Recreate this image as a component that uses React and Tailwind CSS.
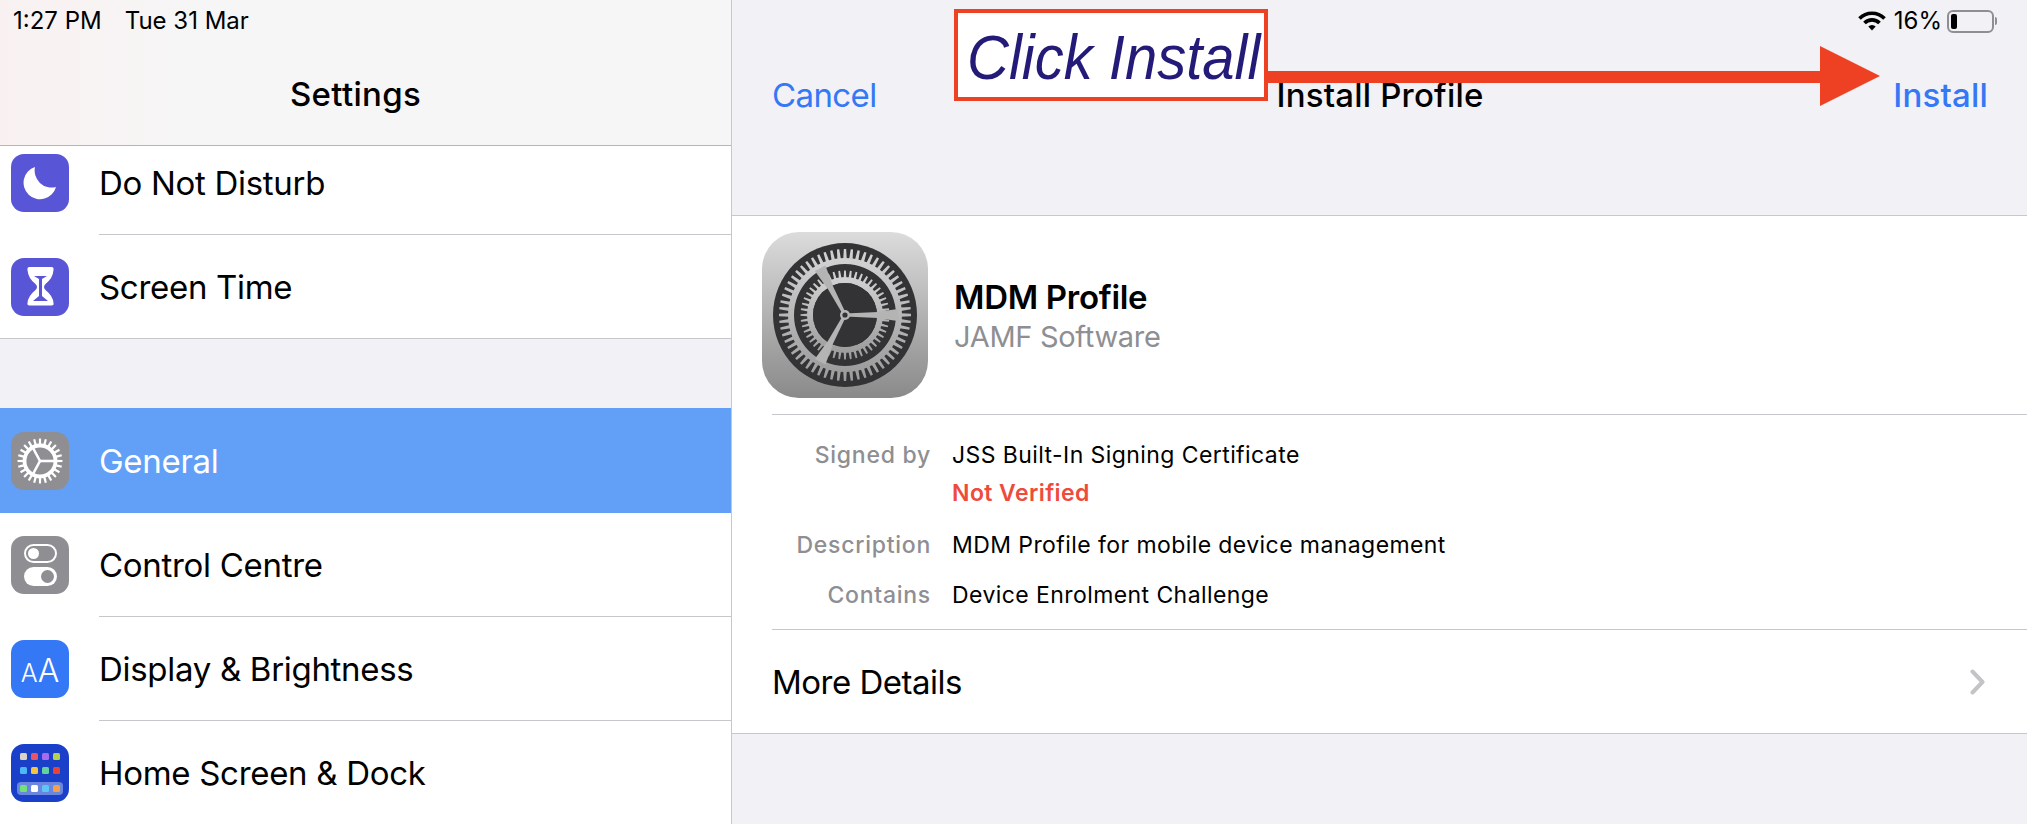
const polar = (r, deg) => {
  const a = (deg * Math.PI) / 180;
  return `${(r * Math.cos(a)).toFixed(2)} ${(r * Math.sin(a)).toFixed(2)}`;
};

// ring of trapezoid teeth around 0,0
function teeth(count, rIn, rOut, wide = 0.3, narrow = 0.17) {
  const step = 360 / count;
  let d = '';
  for (let i = 0; i < count; i++) {
    const a = i * step;
    d += `M${polar(rIn, a - step * wide)}L${polar(rOut, a - step * narrow)}L${polar(rOut, a + step * narrow)}L${polar(rIn, a + step * wide)}Z`;
  }
  return d;
}

function BigGear() {
  return (
    <svg viewBox="-83 -83 166 166" className="w-[166px] h-[166px]">
      <defs>
        <linearGradient id="metal" x1="0" y1="0" x2="0" y2="1">
          <stop offset="0" stopColor="#d2d2d2" />
          <stop offset="1" stopColor="#9c9c9c" />
        </linearGradient>
      </defs>
      <circle r="72" fill="#333335" />
      <g fill="url(#metal)">
        <path d={teeth(60, 56, 66)} />
        <path fillRule="evenodd" d="M0 -57A57 57 0 1 1 0 57A57 57 0 1 1 0 -57ZM0 -51A51 51 0 1 0 0 51A51 51 0 1 0 0 -51Z" />
        <path d={teeth(48, 36, 44.5, 0.3, 0.15)} />
        <path fillRule="evenodd" d="M0 -38A38 38 0 1 1 0 38A38 38 0 1 1 0 -38ZM0 -32A32 32 0 1 0 0 32A32 32 0 1 0 0 -32Z" />
      </g>
      <g fill="#b4b4b4">
        {[0, 118, 242].map((deg) => (
          <polygon key={deg} transform={`rotate(${deg})`} points="31,-3 53,-6 53,6 31,3" />
        ))}
      </g>
      <circle r="32" fill="#333335" />
      <g fill="#b4b4b4">
        {[0, 118, 242].map((deg) => (
          <polygon key={deg} transform={`rotate(${deg})`} points="0,-1.5 33,-3 33,3 0,1.5" />
        ))}
      </g>
      <circle r="5" fill="#b6b6b6" />
      <circle r="2.6" fill="#333335" />
    </svg>
  );
}

function SmallGear() {
  return (
    <svg viewBox="-29 -29 58 58" className="w-[58px] h-[58px]">
      <path d={teeth(24, 15.5, 22.5, 0.3, 0.18)} fill="white" />
      <circle r="15.5" fill="none" stroke="white" strokeWidth="3.8" />
      <g stroke="white" strokeWidth="2.6">
        <line x1="0" y1="0" x2="15" y2="0" />
        <line x1="0" y1="0" x2="-7" y2="-13" />
        <line x1="0" y1="0" x2="-7" y2="13" />
      </g>
    </svg>
  );
}

function Moon() {
  return (
    <svg viewBox="0 0 58 58" className="w-[58px] h-[58px]">
      <path d="M24 13 A16.5 16.5 0 1 0 45 33 A17 17 0 0 1 24 13 Z" fill="white" />
    </svg>
  );
}

function Hourglass() {
  return (
    <svg viewBox="0 0 58 58" className="w-[58px] h-[58px]">
      <path
        d="M18.5 9 H40.5 Q43 9 42.5 12 Q42 20 34.5 26 Q33 27.5 33 29 Q33 30.5 34.5 32 Q42 38 42.5 45 Q43 47.5 40.5 47.5 H18.5 Q16 47.5 16.5 45 Q17 38 24.5 32 Q26 30.5 26 29 Q26 27.5 24.5 26 Q17 20 16.5 12 Q16 9 18.5 9 Z"
        fill="white"
      />
      <path d="M23 18 H36 L31 21 V38 L37 43 H22 L28 38 V21 Z" fill="#5856d6" />
    </svg>
  );
}

function Toggles() {
  return (
    <div className="flex flex-col gap-[4px] w-[33px]">
      <div className="h-[19px] rounded-full border-2 border-white flex items-center pl-[2px]">
        <div className="w-[11px] h-[11px] rounded-full bg-white" />
      </div>
      <div className="h-[19px] rounded-full bg-white flex items-center justify-end pr-[3px]">
        <div className="w-[13px] h-[13px] rounded-full bg-[#8e8e93]" />
      </div>
    </div>
  );
}

function TextSize() {
  return (
    <div className="flex items-baseline text-white font-light leading-none mt-[3px]">
      <span className="text-[25px]">A</span>
      <span className="text-[32px]">A</span>
    </div>
  );
}

const homeRows = [
  ['bg-[#d8d4c8]', 'bg-[#ea5564]', 'bg-[#a66cf0]', 'bg-[#b5d14a]'],
  ['bg-[#4db8f5]', 'bg-[#f5c33c]', 'bg-[#63d2a0]', 'bg-[#ea4335]'],
];

function HomeDots() {
  return (
    <div className="flex flex-col items-center w-[58px] h-full pt-[9px]">
      {homeRows.map((row, i) => (
        <div key={i} className="flex gap-[4px] mb-[7px]">
          {row.map((c) => (
            <div key={c} className={`w-[7px] h-[7px] rounded-[1.5px] ${c}`} />
          ))}
        </div>
      ))}
      <div className="flex gap-[4px] mt-px px-[3px] py-[3px] rounded-[4px] bg-[#6a86de]">
        <div className="w-[7px] h-[7px] rounded-[1.5px] bg-[#74e07a]" />
        <div className="w-[7px] h-[7px] rounded-[1.5px] bg-white" />
        <div className="w-[7px] h-[7px] rounded-[1.5px] bg-[#5cc6f7]" />
        <div className="w-[7px] h-[7px] rounded-[1.5px] bg-[#f2a04a]" />
      </div>
    </div>
  );
}

function SettingsRow({ label, color, height, icon, active, last }) {
  return (
    <div className={`flex shrink-0 pl-[11px] ${height} ${active ? 'bg-[#62a0f8] text-white' : 'bg-white text-black'}`}>
      <div className="h-full flex items-center">
        <div className={`w-[58px] h-[58px] rounded-[13px] flex items-center justify-center ${color}`}>{icon}</div>
      </div>
      <div className={`flex-1 ml-[30px] flex items-center pt-[2px] text-[33px] tracking-[-0.3px] ${last || active ? '' : 'border-b border-[#c8c7cc]'}`}>
        {label}
      </div>
    </div>
  );
}

function Detail({ label, value, className = '' }) {
  return (
    <div className={`flex h-[38px] items-center text-[23px] ${className}`}>
      <div className="w-[199px] text-right text-[#8e8e93] font-medium tracking-[0.75px]">{label}</div>
      <div className="ml-[21px] text-black tracking-[0.42px]">{value}</div>
    </div>
  );
}

export default function App() {
  return (
    <div className="relative w-[2027px] h-[824px] overflow-hidden flex bg-[#f1f1f6] font-['Inter',sans-serif]">
      {/* left column */}
      <div className="w-[732px] shrink-0 h-full border-r border-[#c8c7cc] flex flex-col">
        <div className="h-[146px] shrink-0 border-b border-[#b5b5b8] bg-linear-to-r from-[#f9f1f1] via-[#f6f6f7] via-30% to-[#f6f6f7]">
          <div className="h-[42px] flex items-center pl-[13px] text-[24px] text-black">
            <span>1:27 PM</span>
            <span className="ml-[23px]">Tue 31 Mar</span>
          </div>
          <div className="h-[103px] flex items-center justify-center pr-[20px] pt-[2px] text-[33px] font-medium text-black tracking-[0.3px]">
            Settings
          </div>
        </div>
        {/* first row is scrolled partly under the header */}
        <div className="h-[89px] shrink-0 overflow-hidden flex flex-col justify-end">
          <SettingsRow label="Do Not Disturb" color="bg-[#5856d6]" height="h-[104px]" icon={<Moon />} />
        </div>
        <div className="border-b border-[#c8c7cc]">
          <SettingsRow label="Screen Time" color="bg-[#5856d6]" height="h-[103px]" icon={<Hourglass />} last />
        </div>
        <div className="h-[69px] shrink-0" />
        <SettingsRow label="General" color="bg-[#8e8e93]" height="h-[105px]" icon={<SmallGear />} active />
        <SettingsRow label="Control Centre" color="bg-[#8e8e93]" height="h-[104px]" icon={<Toggles />} />
        <SettingsRow label="Display & Brightness" color="bg-[#3478f6]" height="h-[104px]" icon={<TextSize />} />
        <SettingsRow label="Home Screen & Dock" color="bg-[#1a3fc9]" height="h-[104px]" icon={<HomeDots />} last />
      </div>

      {/* right column */}
      <div className="flex-1 flex flex-col">
        <div className="h-[216px] shrink-0 border-b border-[#c8c7cc]">
          <div className="h-[42px] flex items-center justify-end pr-[30px]">
            <svg viewBox="0 0 28 20" className="w-[28px] h-[20px]" fill="none" stroke="black" strokeWidth="3.6">
              <path d="M1.5 7.5 A17.5 17.5 0 0 1 26.5 7.5" />
              <path d="M6.5 12 A10.5 10.5 0 0 1 21.5 12" />
              <path d="M14 19.5 L10.3 15.6 A5.2 5.2 0 0 1 17.7 15.6 Z" fill="black" stroke="none" />
            </svg>
            <span className="ml-[8px] text-[24px] text-black">16%</span>
            <div className="ml-[5px] flex items-center">
              <div className="w-[47px] h-[23px] rounded-[6px] border-2 border-[#8f8f92] p-[2px]">
                <div className="w-[6px] h-full rounded-[2px] bg-black" />
              </div>
              <div className="ml-[1px] w-[2px] h-[8px] rounded-r-full bg-[#8f8f92]" />
            </div>
          </div>
          <div className="h-[106px] grid grid-cols-[1fr_auto_1fr] items-center pl-[40px] pr-[39px] pt-[1px] text-[33px]">
            <div className="text-[#3478f6] tracking-[-0.6px]">Cancel</div>
            <div className="font-medium text-black tracking-[0.2px]">Install Profile</div>
            <div className="text-right text-[#3478f6] font-medium tracking-[0.2px]">Install</div>
          </div>
        </div>

        <div className="bg-white border-b border-[#c8c7cc] h-[518px]">
          <div className="h-[198px] flex pl-[30px] pt-[16px]">
            <div className="w-[166px] h-[166px] rounded-[37px] bg-linear-to-b from-[#dcdcdc] to-[#8a8a8a]">
              <BigGear />
            </div>
            <div className="ml-[26px] pt-[45px]">
              <div className="text-[33px] leading-[40px] font-semibold text-black tracking-[-0.3px]">MDM Profile</div>
              <div className="text-[29px] leading-[40px] text-[#8e8e93] tracking-[-0.3px]">JAMF Software</div>
            </div>
          </div>
          <div className="ml-[40px] h-px bg-[#c8c7cc]" />
          <div className="h-[214px] pt-[21px]">
            <Detail label="Signed by" value="JSS Built-In Signing Certificate" />
            <Detail label="" value={<span className="text-[#ee4b3c] font-semibold">Not Verified</span>} />
            <Detail label="Description" value="MDM Profile for mobile device management" className="mt-[14px]" />
            <Detail label="Contains" value="Device Enrolment Challenge" className="mt-[12px]" />
          </div>
          <div className="ml-[40px] h-px bg-[#c8c7cc]" />
          <div className="h-[103px] flex items-center justify-between pl-[40px] pr-[42px] pt-[3px] text-[33px] tracking-[-0.5px] text-black">
            <span>More Details</span>
            <svg viewBox="0 0 15 26" className="w-[15px] h-[26px] -mt-[3px]" fill="none" stroke="#c4c4c7" strokeWidth="4" strokeLinecap="round" strokeLinejoin="round">
              <path d="M2.5 2.5 L12.5 13 L2.5 23.5" />
            </svg>
          </div>
        </div>
      </div>

      {/* annotation drawn over the screenshot */}
      <svg viewBox="0 0 613 60" className="absolute left-[1267px] top-[46px] w-[613px] h-[60px]">
        <polygon points="0,25 553,25 553,0 613,30 553,60 553,37 0,37" fill="#ee4124" />
      </svg>
      <div className="absolute left-[954px] top-[9px] w-[314px] h-[92px] border-4 border-[#ee4124] bg-white flex items-center pl-[9px] pt-[4px] font-['Liberation_Sans',sans-serif] italic text-[58px] leading-none text-[#241a78] whitespace-nowrap">
        <span className="inline-block scale-y-[1.09]">Click Install</span>
      </div>
    </div>
  );
}
